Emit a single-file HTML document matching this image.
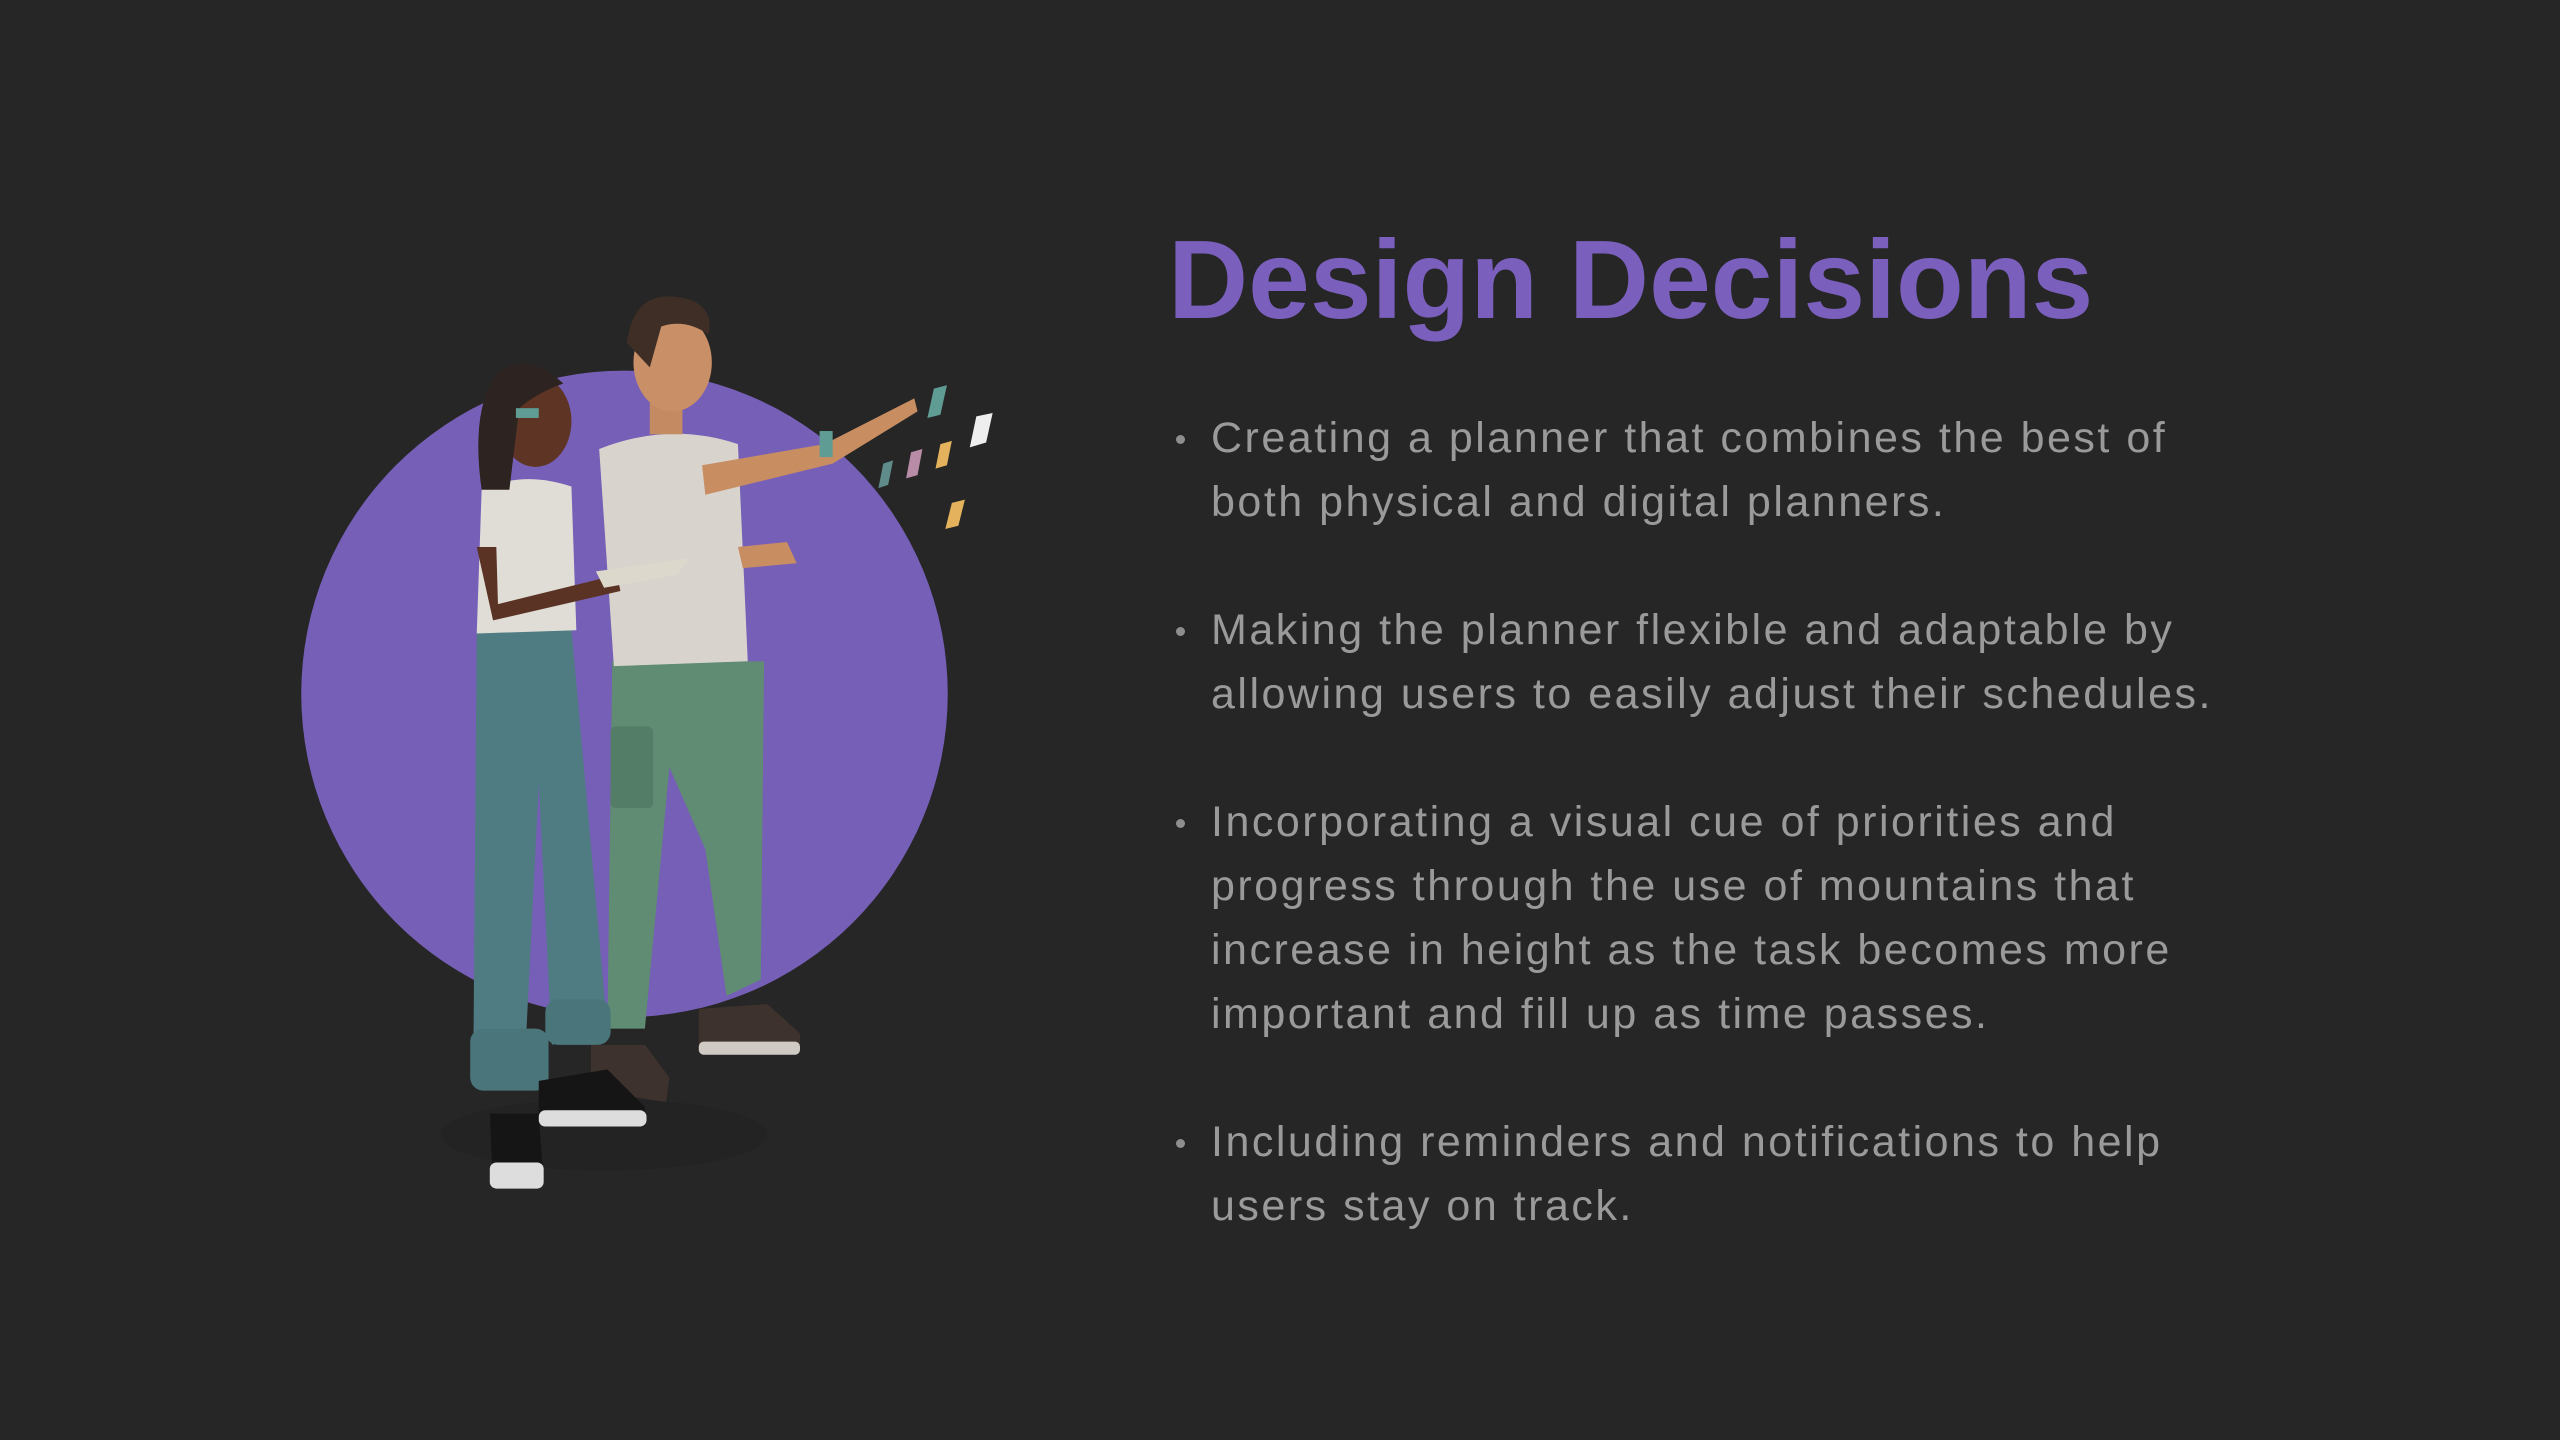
<!DOCTYPE html>
<html><head><meta charset="utf-8"><style>
html,body{margin:0;padding:0;background:#262626;width:2560px;height:1440px;overflow:hidden}
svg.ill{position:absolute;left:0;top:0;width:2560px;height:1440px}
h1{position:absolute;left:1168px;top:200px;margin:0;font-family:"Liberation Sans",sans-serif;font-weight:700;font-size:111px;color:#7a5fbd;letter-spacing:0px;line-height:160px}
ul{position:absolute;left:1211px;top:406px;margin:0;padding:0;width:1300px;list-style:none;font-family:"Liberation Sans",sans-serif;font-size:43px;line-height:64px;color:#9a9a9a;letter-spacing:2.5px}
li{position:relative;margin-bottom:64px}
li:before{content:"";position:absolute;left:-35px;top:29px;width:9px;height:9px;border-radius:50%;background:#8e8e8e}
</style></head><body>
<svg class="ill" viewBox="0 0 1568 882">
<circle cx="382.5" cy="425" r="198" fill="#765fb7"/>
<ellipse cx="370" cy="695" rx="100" ry="22" fill="#1f1f1f" opacity=".5"/>
<!-- man -->
<path d="M375 405 L468 405 L466 600 L445 610 L432 520 L410 470 L395 630 L372 630 Z" fill="#5f8c73"/>
<rect x="374" y="445" width="26" height="50" rx="3" fill="#547d67"/>
<path d="M428 618 L470 615 L490 633 L490 645 L428 645 Z" fill="#3e322e"/>
<rect x="428" y="638" width="62" height="8" rx="3" fill="#cfcac4"/>
<path d="M362 640 L395 640 L410 660 L408 675 L362 668 Z" fill="#3e322e"/>
<path d="M367 275 Q410 258 452 272 L458 405 L376 408 Z" fill="#d8d4cd"/>
<path d="M430 285 L505 272 L560 244 L562 252 L510 284 L432 303 Z" fill="#c98d62"/>
<rect x="502" y="264" width="8" height="16" fill="#5f9c94"/>
<path d="M452 335 L482 332 L488 345 L455 348 Z" fill="#c98d62"/>
<rect x="398" y="238" width="20" height="28" fill="#c48b62"/>
<ellipse cx="412" cy="222" rx="24" ry="30" fill="#c98f66"/>
<path d="M384 210 Q388 178 415 182 Q438 185 434 205 Q420 195 405 200 L398 225 Z" fill="#3e2e26"/>
<!-- woman -->
<path d="M292 385 L350 385 L372 630 L338 640 L330 480 L322 640 L290 640 Z" fill="#4f7c82"/>
<rect x="288" y="630" width="48" height="38" rx="8" fill="#4a767b"/>
<rect x="334" y="612" width="40" height="28" rx="8" fill="#4a767b"/>
<path d="M300 682 L330 682 L333 725 L302 728 Z" fill="#151515"/>
<rect x="300" y="712" width="33" height="16" rx="4" fill="#ddd"/>
<path d="M330 662 L372 655 L395 678 L395 690 L330 688 Z" fill="#151515"/>
<rect x="330" y="680" width="66" height="10" rx="4" fill="#ddd"/>
<path d="M295 300 Q320 288 350 298 L353 386 L292 388 Z" fill="#e0ddd7"/>
<path d="M292 335 L302 380 L380 362 L378 352 L305 370 L304 335 Z" fill="#5a3324"/>
<path d="M365 350 L422 342 L415 352 L370 360 Z" fill="#ddd8cc"/>
<ellipse cx="328" cy="258" rx="22" ry="28" fill="#5e3524"/>
<path d="M295 300 Q288 250 305 228 Q325 215 345 235 Q330 240 318 250 L312 300 Z" fill="#2d2320"/>
<rect x="316" y="250" width="14" height="6" fill="#5f9c94"/>
<!-- notes -->
<path d="M572 238 l8 -2 l-4 18 l-8 2 Z" fill="#5f9c94"/>
<path d="M598 255 l10 -2 l-4 18 l-10 3 Z" fill="#eee"/>
<path d="M576 272 l7 -2 l-3 15 l-7 2 Z" fill="#e4b25c"/>
<path d="M558 277 l7 -2 l-3 16 l-7 2 Z" fill="#b88ca6"/>
<path d="M541 284 l6 -2 l-3 15 l-6 2 Z" fill="#5f8c8a"/>
<path d="M583 308 l8 -2 l-4 16 l-8 2 Z" fill="#e4b25c"/>
</svg>
<h1>Design Decisions</h1>
<ul>
<li>Creating a planner that combines the best of<br>both physical and digital planners.</li>
<li>Making the planner flexible and adaptable by<br>allowing users to easily adjust their schedules.</li>
<li>Incorporating a visual cue of priorities and<br>progress through the use of mountains that<br>increase in height as the task becomes more<br>important and fill up as time passes.</li>
<li>Including reminders and notifications to help<br>users stay on track.</li>
</ul>
</body></html>
